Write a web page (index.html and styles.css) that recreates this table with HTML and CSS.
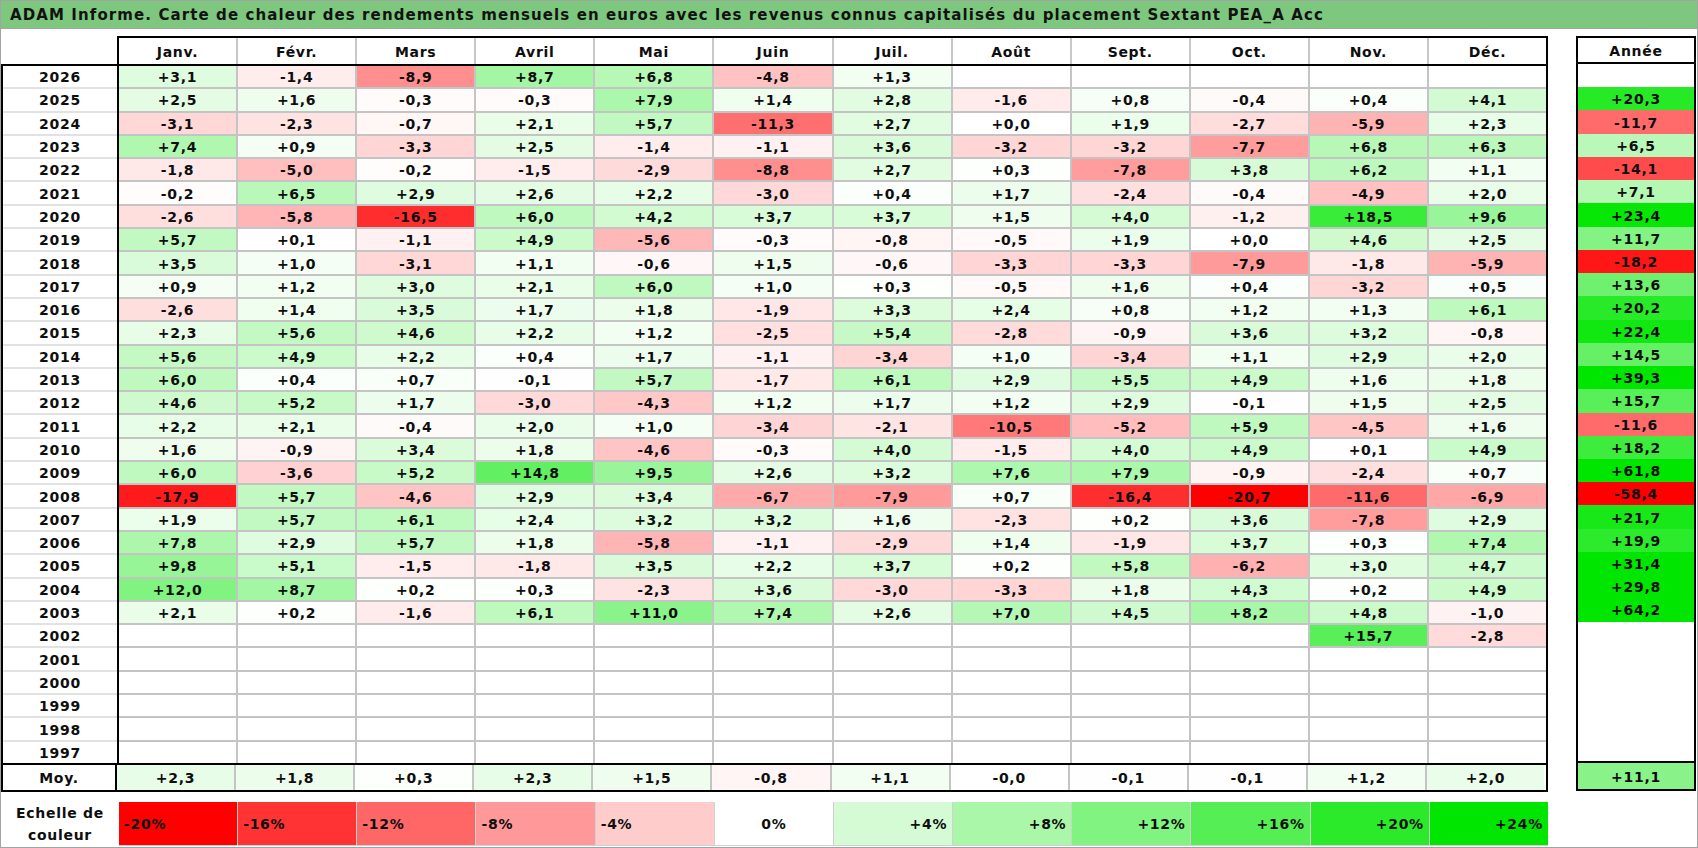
FILE: index.html
```html
<!DOCTYPE html>
<html lang="fr">
<head>
<meta charset="utf-8">
<title>ADAM Informe - Carte de chaleur</title>
<link rel="stylesheet" href="styles.css">
</head>
<body>
<div class="page">
  <div class="title">ADAM Informe. Carte de chaleur des rendements mensuels en euros avec les revenus connus capitalisés du placement Sextant PEA_A Acc</div>
  <div class="main">
    <div class="heat">
      <div class="hrow">
        <div class="hblank"></div>
        <div class="hcells">
          <span>Janv.</span><span>Févr.</span><span>Mars</span><span>Avril</span><span>Mai</span><span>Juin</span><span>Juil.</span><span>Août</span><span>Sept.</span><span>Oct.</span><span>Nov.</span><span>Déc.</span>
        </div>
      </div>
      <div class="hbody">
        <div class="labels">
          <span>2026</span><span>2025</span><span>2024</span><span>2023</span><span>2022</span><span>2021</span><span>2020</span><span>2019</span><span>2018</span><span>2017</span><span>2016</span><span>2015</span><span>2014</span><span>2013</span><span>2012</span><span>2011</span><span>2010</span><span>2009</span><span>2008</span><span>2007</span><span>2006</span><span>2005</span><span>2004</span><span>2003</span><span>2002</span><span>2001</span><span>2000</span><span>1999</span><span>1998</span><span>1997</span>
        </div>
        <div class="cells">
          <span>+3,1</span><span>-1,4</span><span>-8,9</span><span>+8,7</span><span>+6,8</span><span>-4,8</span><span>+1,3</span><span></span><span></span><span></span><span></span><span></span>
          <span>+2,5</span><span>+1,6</span><span>-0,3</span><span>-0,3</span><span>+7,9</span><span>+1,4</span><span>+2,8</span><span>-1,6</span><span>+0,8</span><span>-0,4</span><span>+0,4</span><span>+4,1</span>
          <span>-3,1</span><span>-2,3</span><span>-0,7</span><span>+2,1</span><span>+5,7</span><span>-11,3</span><span>+2,7</span><span>+0,0</span><span>+1,9</span><span>-2,7</span><span>-5,9</span><span>+2,3</span>
          <span>+7,4</span><span>+0,9</span><span>-3,3</span><span>+2,5</span><span>-1,4</span><span>-1,1</span><span>+3,6</span><span>-3,2</span><span>-3,2</span><span>-7,7</span><span>+6,8</span><span>+6,3</span>
          <span>-1,8</span><span>-5,0</span><span>-0,2</span><span>-1,5</span><span>-2,9</span><span>-8,8</span><span>+2,7</span><span>+0,3</span><span>-7,8</span><span>+3,8</span><span>+6,2</span><span>+1,1</span>
          <span>-0,2</span><span>+6,5</span><span>+2,9</span><span>+2,6</span><span>+2,2</span><span>-3,0</span><span>+0,4</span><span>+1,7</span><span>-2,4</span><span>-0,4</span><span>-4,9</span><span>+2,0</span>
          <span>-2,6</span><span>-5,8</span><span>-16,5</span><span>+6,0</span><span>+4,2</span><span>+3,7</span><span>+3,7</span><span>+1,5</span><span>+4,0</span><span>-1,2</span><span>+18,5</span><span>+9,6</span>
          <span>+5,7</span><span>+0,1</span><span>-1,1</span><span>+4,9</span><span>-5,6</span><span>-0,3</span><span>-0,8</span><span>-0,5</span><span>+1,9</span><span>+0,0</span><span>+4,6</span><span>+2,5</span>
          <span>+3,5</span><span>+1,0</span><span>-3,1</span><span>+1,1</span><span>-0,6</span><span>+1,5</span><span>-0,6</span><span>-3,3</span><span>-3,3</span><span>-7,9</span><span>-1,8</span><span>-5,9</span>
          <span>+0,9</span><span>+1,2</span><span>+3,0</span><span>+2,1</span><span>+6,0</span><span>+1,0</span><span>+0,3</span><span>-0,5</span><span>+1,6</span><span>+0,4</span><span>-3,2</span><span>+0,5</span>
          <span>-2,6</span><span>+1,4</span><span>+3,5</span><span>+1,7</span><span>+1,8</span><span>-1,9</span><span>+3,3</span><span>+2,4</span><span>+0,8</span><span>+1,2</span><span>+1,3</span><span>+6,1</span>
          <span>+2,3</span><span>+5,6</span><span>+4,6</span><span>+2,2</span><span>+1,2</span><span>-2,5</span><span>+5,4</span><span>-2,8</span><span>-0,9</span><span>+3,6</span><span>+3,2</span><span>-0,8</span>
          <span>+5,6</span><span>+4,9</span><span>+2,2</span><span>+0,4</span><span>+1,7</span><span>-1,1</span><span>-3,4</span><span>+1,0</span><span>-3,4</span><span>+1,1</span><span>+2,9</span><span>+2,0</span>
          <span>+6,0</span><span>+0,4</span><span>+0,7</span><span>-0,1</span><span>+5,7</span><span>-1,7</span><span>+6,1</span><span>+2,9</span><span>+5,5</span><span>+4,9</span><span>+1,6</span><span>+1,8</span>
          <span>+4,6</span><span>+5,2</span><span>+1,7</span><span>-3,0</span><span>-4,3</span><span>+1,2</span><span>+1,7</span><span>+1,2</span><span>+2,9</span><span>-0,1</span><span>+1,5</span><span>+2,5</span>
          <span>+2,2</span><span>+2,1</span><span>-0,4</span><span>+2,0</span><span>+1,0</span><span>-3,4</span><span>-2,1</span><span>-10,5</span><span>-5,2</span><span>+5,9</span><span>-4,5</span><span>+1,6</span>
          <span>+1,6</span><span>-0,9</span><span>+3,4</span><span>+1,8</span><span>-4,6</span><span>-0,3</span><span>+4,0</span><span>-1,5</span><span>+4,0</span><span>+4,9</span><span>+0,1</span><span>+4,9</span>
          <span>+6,0</span><span>-3,6</span><span>+5,2</span><span>+14,8</span><span>+9,5</span><span>+2,6</span><span>+3,2</span><span>+7,6</span><span>+7,9</span><span>-0,9</span><span>-2,4</span><span>+0,7</span>
          <span>-17,9</span><span>+5,7</span><span>-4,6</span><span>+2,9</span><span>+3,4</span><span>-6,7</span><span>-7,9</span><span>+0,7</span><span>-16,4</span><span>-20,7</span><span>-11,6</span><span>-6,9</span>
          <span>+1,9</span><span>+5,7</span><span>+6,1</span><span>+2,4</span><span>+3,2</span><span>+3,2</span><span>+1,6</span><span>-2,3</span><span>+0,2</span><span>+3,6</span><span>-7,8</span><span>+2,9</span>
          <span>+7,8</span><span>+2,9</span><span>+5,7</span><span>+1,8</span><span>-5,8</span><span>-1,1</span><span>-2,9</span><span>+1,4</span><span>-1,9</span><span>+3,7</span><span>+0,3</span><span>+7,4</span>
          <span>+9,8</span><span>+5,1</span><span>-1,5</span><span>-1,8</span><span>+3,5</span><span>+2,2</span><span>+3,7</span><span>+0,2</span><span>+5,8</span><span>-6,2</span><span>+3,0</span><span>+4,7</span>
          <span>+12,0</span><span>+8,7</span><span>+0,2</span><span>+0,3</span><span>-2,3</span><span>+3,6</span><span>-3,0</span><span>-3,3</span><span>+1,8</span><span>+4,3</span><span>+0,2</span><span>+4,9</span>
          <span>+2,1</span><span>+0,2</span><span>-1,6</span><span>+6,1</span><span>+11,0</span><span>+7,4</span><span>+2,6</span><span>+7,0</span><span>+4,5</span><span>+8,2</span><span>+4,8</span><span>-1,0</span>
          <span></span><span></span><span></span><span></span><span></span><span></span><span></span><span></span><span></span><span></span><span>+15,7</span><span>-2,8</span>
          <span></span><span></span><span></span><span></span><span></span><span></span><span></span><span></span><span></span><span></span><span></span><span></span>
          <span></span><span></span><span></span><span></span><span></span><span></span><span></span><span></span><span></span><span></span><span></span><span></span>
          <span></span><span></span><span></span><span></span><span></span><span></span><span></span><span></span><span></span><span></span><span></span><span></span>
          <span></span><span></span><span></span><span></span><span></span><span></span><span></span><span></span><span></span><span></span><span></span><span></span>
          <span></span><span></span><span></span><span></span><span></span><span></span><span></span><span></span><span></span><span></span><span></span><span></span>
        </div>
      </div>
      <div class="moy">
        <div class="moylab">Moy.</div>
        <div class="moycells">
          <span>+2,3</span><span>+1,8</span><span>+0,3</span><span>+2,3</span><span>+1,5</span><span>-0,8</span><span>+1,1</span><span>-0,0</span><span>-0,1</span><span>-0,1</span><span>+1,2</span><span>+2,0</span>
        </div>
      </div>
      <div class="scale">
        <div class="slab">Echelle de<br>couleur</div>
        <div class="scells">
          <span class="neg" data-v="-20">-20%</span><span class="neg" data-v="-16">-16%</span><span class="neg" data-v="-12">-12%</span><span class="neg" data-v="-8">-8%</span><span class="neg" data-v="-4">-4%</span><span class="zero" data-v="0">0%</span><span class="pos" data-v="4">+4%</span><span class="pos" data-v="8">+8%</span><span class="pos" data-v="12">+12%</span><span class="pos" data-v="16">+16%</span><span class="pos" data-v="20">+20%</span><span class="pos" data-v="24">+24%</span>
        </div>
      </div>
    </div>
    <div class="ybox">
      <div class="yhead">Année</div>
      <div class="ybody">
        <span></span><span>+20,3</span><span>-11,7</span><span>+6,5</span><span>-14,1</span><span>+7,1</span><span>+23,4</span><span>+11,7</span><span>-18,2</span><span>+13,6</span><span>+20,2</span><span>+22,4</span><span>+14,5</span><span>+39,3</span><span>+15,7</span><span>-11,6</span><span>+18,2</span><span>+61,8</span><span>-58,4</span><span>+21,7</span><span>+19,9</span><span>+31,4</span><span>+29,8</span><span>+64,2</span><span></span><span></span><span></span><span></span><span></span><span></span>
      </div>
      <div class="ymoy">+11,1</div>
    </div>
  </div>
</div>
<script src="script.js"></script>
</body>
</html>
```

FILE: styles.css
```css
html, body {
  margin: 0;
  padding: 0;
  background: #fff;
}
body {
  font-family: "DejaVu Sans", "Liberation Sans", sans-serif;
  font-weight: bold;
  color: #0e0e0e;
}
.page {
  width: 1698px;
  height: 848px;
  box-sizing: border-box;
  border: 1px solid #a3a3a3;
  overflow: hidden;
}
.title {
  height: 27px;
  border-bottom: 1px solid #a3a3a3;
  background: #7ec77e;
  font-size: 15px;
  letter-spacing: 1.1px;
  line-height: 29px;
  padding-left: 9px;
  white-space: nowrap;
  color: #121212;
}
.main {
  display: flex;
  align-items: flex-start;
  margin-top: 7px;
  font-size: 14px;
  letter-spacing: 0.7px;
}
.heat {
  width: 1547px;
  flex: none;
}
.hrow {
  display: flex;
  height: 28px;
}
.hblank {
  width: 116px;
  flex: none;
}
.hcells {
  width: 1427px;
  flex: none;
  border: 2px solid #000;
  border-bottom: 0;
  display: grid;
  grid-template-columns: repeat(12, 1fr);
  column-gap: 2px;
  background: #c8c8c8;
}
.hcells span,
.labels span,
.cells span,
.moycells span,
.moylab,
.ybody span,
.yhead,
.ymoy {
  display: flex;
  align-items: center;
  justify-content: center;
  background: #fff;
  padding-top: 1px;
  box-sizing: border-box;
}
.hbody {
  display: flex;
  border: 2px solid #000;
  border-bottom: 0;
  height: 697px;
}
.labels {
  width: 114px;
  flex: none;
  border-right: 2px solid #000;
  display: grid;
  grid-template-rows: repeat(30, 1fr);
  row-gap: 2px;
  background: #e2e2e2;
}
.cells {
  width: 1427px;
  flex: none;
  display: grid;
  grid-template-columns: repeat(12, 1fr);
  grid-template-rows: repeat(30, 1fr);
  gap: 2px;
  background: #c4c4c4;
}
.moy {
  display: flex;
  border: 2px solid #000;
  height: 25px;
}
.moylab {
  width: 114px;
  flex: none;
  border-right: 2px solid #000;
}
.moycells {
  width: 1427px;
  flex: none;
  display: grid;
  grid-template-columns: repeat(12, 1fr);
  column-gap: 2px;
  background: #c4c4c4;
}
.scale {
  display: flex;
  margin-top: 10px;
  height: 44px;
}
.slab {
  width: 118px;
  flex: none;
  display: flex;
  align-items: center;
  justify-content: center;
  text-align: center;
  line-height: 22px;
}
.scells {
  width: 1429px;
  flex: none;
  display: grid;
  grid-template-columns: repeat(12, 1fr);
  column-gap: 1px;
  background: #d0d0d0;
  border-bottom: 1px solid #d0d0d0;
}
.scells span {
  display: flex;
  align-items: center;
  padding: 1px 5px 0;
  background: #fff;
}
.scells .neg {
  justify-content: flex-start;
}
.scells .zero {
  justify-content: center;
}
.scells .pos {
  justify-content: flex-end;
}
.ybox {
  width: 120px;
  flex: none;
  margin-left: 28px;
}
.yhead {
  height: 26px;
  border: 2px solid #000;
  border-bottom: 0;
}
.ybody {
  height: 697px;
  border: 2px solid #000;
  border-bottom: 0;
  display: grid;
  grid-template-rows: repeat(30, 1fr);
}
.ymoy {
  height: 25px;
  border: 2px solid #000;
  box-sizing: content-box;
}
```

FILE: script.js
```js
function heatColor(v) {
  if (v < 0) {
    var t = Math.min(1, -v / 20);
    var c = Math.round(255 * (1 - t));
    return 'rgb(255,' + c + ',' + c + ')';
  }
  var s = Math.min(1, v / 24);
  var k = Math.round(255 * (1 - s));
  var g = Math.round(255 - 25 * s);
  return 'rgb(' + k + ',' + g + ',' + k + ')';
}
document.querySelectorAll('.cells span, .moycells span, .ybody span, .ymoy').forEach(function (el) {
  var txt = el.textContent.trim();
  if (!txt) return;
  var v = parseFloat(txt.replace(',', '.'));
  if (isNaN(v)) return;
  el.style.backgroundColor = heatColor(v);
});
document.querySelectorAll('.scells span').forEach(function (el) {
  el.style.backgroundColor = heatColor(parseFloat(el.dataset.v));
});
```
